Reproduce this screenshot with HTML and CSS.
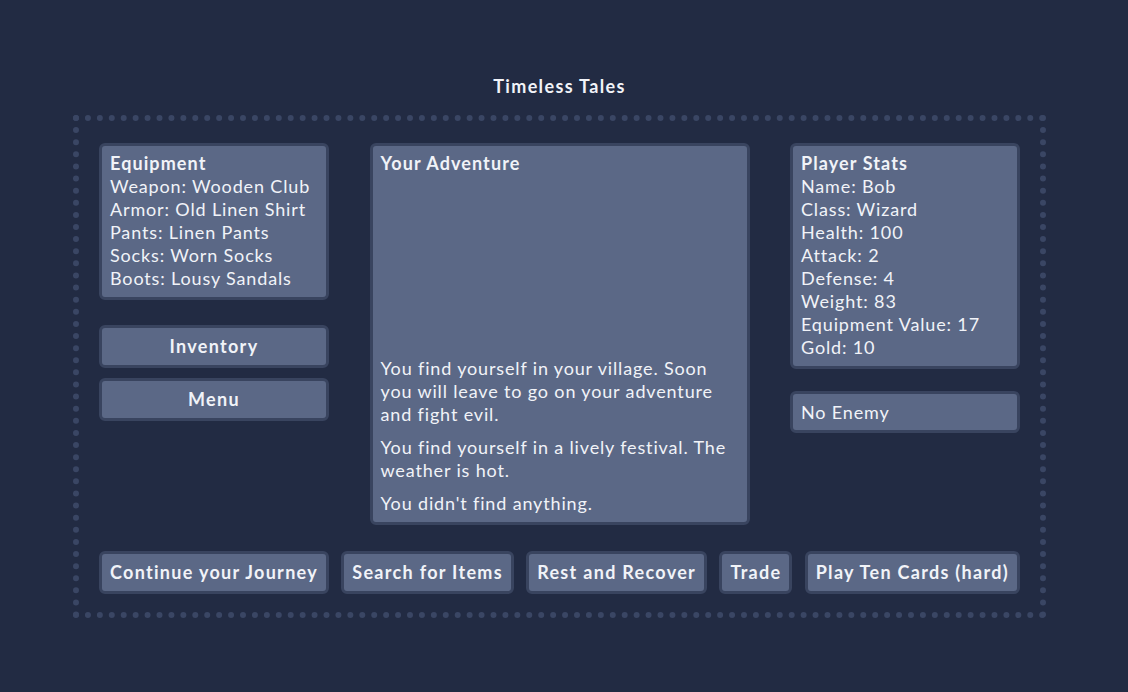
FILE: index.html
```html
<!DOCTYPE html>
<html lang="en">
<head>
<meta charset="utf-8">
<title>Timeless Tales</title>
<link rel="stylesheet" href="styles.css">
</head>
<body>
<div class="page">
  <h1 class="title">Timeless Tales</h1>
  <div class="frame">
    <div class="columns">
      <div class="col">
        <div class="panel">
          <div class="panel-title">Equipment</div>
          <div>Weapon: Wooden Club</div>
          <div>Armor: Old Linen Shirt</div>
          <div>Pants: Linen Pants</div>
          <div>Socks: Worn Socks</div>
          <div>Boots: Lousy Sandals</div>
        </div>
        <div class="side-buttons">
          <button class="btn wide">Inventory</button>
          <button class="btn wide">Menu</button>
        </div>
      </div>
      <div class="panel adventure">
        <div class="panel-title">Your Adventure</div>
        <div class="log">
          <p>You find yourself in your village. Soon you will leave to go on your adventure and fight evil.</p>
          <p>You find yourself in a lively festival. The weather is hot.</p>
          <p>You didn't find anything.</p>
        </div>
      </div>
      <div class="col">
        <div class="panel">
          <div class="panel-title">Player Stats</div>
          <div>Name: Bob</div>
          <div>Class: Wizard</div>
          <div>Health: 100</div>
          <div>Attack: 2</div>
          <div>Defense: 4</div>
          <div>Weight: 83</div>
          <div>Equipment Value: 17</div>
          <div>Gold: 10</div>
        </div>
        <div class="panel enemy">No Enemy</div>
      </div>
    </div>
    <div class="actions">
      <button class="btn">Continue your Journey</button>
      <button class="btn">Search for Items</button>
      <button class="btn">Rest and Recover</button>
      <button class="btn">Trade</button>
      <button class="btn">Play Ten Cards (hard)</button>
    </div>
  </div>
</div>
</body>
</html>
```
FILE: styles.css
```css
html, body {
  margin: 0;
  padding: 0;
  background: #222b43;
}
body {
  font-family: "Lato", "Noto Sans", sans-serif;
  font-size: 18px;
  line-height: 23px;
  letter-spacing: 0.85px;
  color: #f1f3f8;
}
.page {
  width: 1119px;
  display: flex;
  flex-direction: column;
  align-items: center;
  padding-top: 75px;
}
.title {
  margin: 0 0 17px;
  font-size: 18px;
  line-height: 23px;
  font-weight: 700;
  letter-spacing: 1.35px;
}
.frame {
  width: 921px;
  padding: 22px 20px 18px;
  border: 6px dotted #3a4664;
}
.columns {
  display: grid;
  grid-template-columns: 230px 380px 230px;
  justify-content: space-between;
  align-items: start;
}
.col {
  display: flex;
  flex-direction: column;
}
.panel {
  background: #5b6886;
  border: 3px solid #39445f;
  border-radius: 6px;
  padding: 6px 8px 7px;
}
.panel-title {
  font-weight: 700;
  letter-spacing: 1.1px;
}
.side-buttons {
  margin-top: 25px;
  display: flex;
  flex-direction: column;
  gap: 10px;
}
.adventure {
  height: 382px;
  box-sizing: border-box;
  display: flex;
  flex-direction: column;
  justify-content: space-between;
}
.log p {
  margin: 10px 0 0;
}
.enemy {
  margin-top: 22px;
  padding: 7px 8px 6px;
}
.actions {
  margin-top: 26px;
  display: flex;
  justify-content: space-between;
  gap: 10px;
}
.btn {
  font: inherit;
  font-weight: 700;
  letter-spacing: 1.3px;
  color: #f1f3f8;
  background: #5b6886;
  border: 3px solid #39445f;
  border-radius: 6px;
  padding: 0 8px;
  height: 43px;
  box-sizing: border-box;
  line-height: 23px;
  cursor: pointer;
}
.btn.wide {
  width: 100%;
}
```
